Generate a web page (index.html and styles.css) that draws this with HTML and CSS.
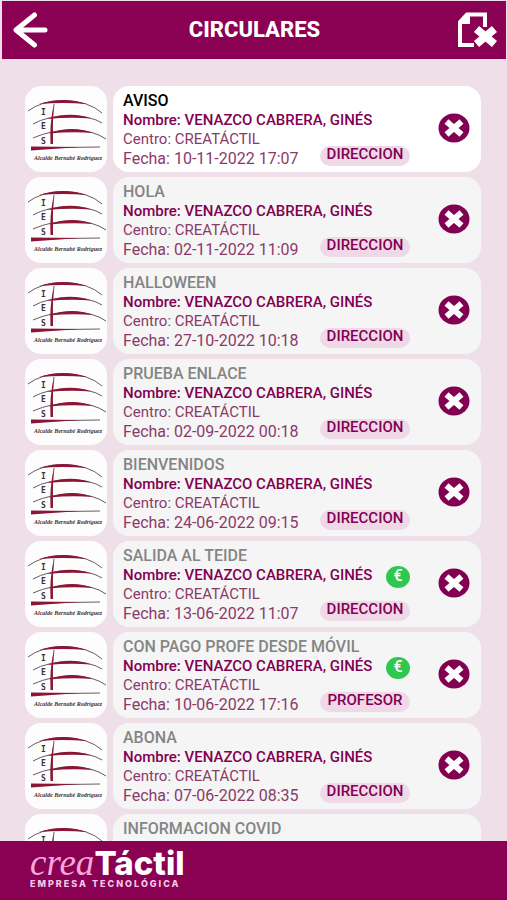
FILE: index.html
```html
<!DOCTYPE html>
<html lang="es">

<head>
    <meta charset="UTF-8">
    <meta name="viewport" content="width=device-width, initial-scale=1.0">
    <title>Circulares</title>
    <link rel="stylesheet" href="styles.css">
</head>

<body>
    <!-- Shared drawings -->
    <svg class="sprites" aria-hidden="true">
        <symbol id="school" viewBox="0 0 82 86">
            <g fill="none" stroke="#6b5a61" stroke-width="1">
                <path d="M3 25 Q16 15 38 14.500 Q64 15 77 27" />
                <path d="M8 38 Q22 30 45 29.500 Q66 30 77 37" />
                <path d="M8 52 Q26 44 47 44 Q68 44 81 53" />
                <path d="M29 18 Q26 36 27 58" />
                <path d="M7 62 L75 61" />
            </g>
            <g fill="#8a1535">
                <path d="M14 18 Q38 10 62 18 Q38 16 14 18z" />
                <path d="M22 33 Q45 25 66 32.500 Q45 31 22 33z" />
                <path d="M24 47.500 Q47 39 68 47 Q47 45.500 24 47.500z" />
                <path d="M28.500 20 Q24.500 38 25.500 58 L28 58 Q27.500 38 28.500 20z" />
                <path d="M6 60.500 L55 61 L6 64.500z" />
            </g>
            <g class="school-letters">
                <text x="16" y="29">I</text>
                <text x="16" y="43">E</text>
                <text x="16" y="58">S</text>
            </g>
            <text class="school-name" x="9" y="74">Alcalde Bernabé Rodríguez</text>
        </symbol>
        <symbol id="remove" viewBox="0 0 32 30">
            <ellipse cx="16" cy="15" rx="15.500" ry="14.500" fill="#820052" />
            <path d="M8.500 8.500 L23.500 21.500 M23.500 8.500 L8.500 21.500" stroke="#fff" stroke-width="6" />
        </symbol>
    </svg>

    <header class="header">
        <button class="header-btn" type="button" aria-label="Volver">
            <svg width="40" height="36" viewBox="0 0 40 36" fill="none" stroke="#fff" stroke-width="5" stroke-linecap="round" stroke-linejoin="round">
                <path d="M22.500 3 L4 18 L22.500 33 M5 18 H33" />
            </svg>
        </button>
        <h1>CIRCULARES</h1>
        <button class="header-btn" type="button" aria-label="Borrar circulares">
            <svg width="40" height="36" viewBox="0 0 40 36" fill="none" stroke="#fff">
                <path d="M17 33 H3 V10 L10 2.500 H28 V15" stroke-width="4" />
                <path d="M2 12 V9 L10 1 H13 V12z" fill="#fff" stroke="none" />
                <path d="M19.500 17 L37.500 32 M37.500 17 L19.500 32" stroke-width="8" />
            </svg>
        </button>
    </header>

    <main class="list">
        <article class="row">
            <svg class="thumb" role="img" aria-label="IES"><use href="#school" /></svg>
            <div class="card unread">
                <div class="info">
                    <h2>AVISO</h2>
                    <div class="line name"><span>Nombre: VENAZCO CABRERA, GINÉS</span></div>
                    <div class="line">Centro: CREATÁCTIL</div>
                    <div class="line date"><span>Fecha: 10-11-2022 17:07</span><span class="badge">DIRECCION</span></div>
                </div>
                <button class="remove" type="button" aria-label="Borrar"><svg width="32" height="30"><use href="#remove" /></svg></button>
            </div>
        </article>
        <article class="row">
            <svg class="thumb" role="img" aria-label="IES"><use href="#school" /></svg>
            <div class="card">
                <div class="info">
                    <h2>HOLA</h2>
                    <div class="line name"><span>Nombre: VENAZCO CABRERA, GINÉS</span></div>
                    <div class="line">Centro: CREATÁCTIL</div>
                    <div class="line date"><span>Fecha: 02-11-2022 11:09</span><span class="badge">DIRECCION</span></div>
                </div>
                <button class="remove" type="button" aria-label="Borrar"><svg width="32" height="30"><use href="#remove" /></svg></button>
            </div>
        </article>
        <article class="row">
            <svg class="thumb" role="img" aria-label="IES"><use href="#school" /></svg>
            <div class="card">
                <div class="info">
                    <h2>HALLOWEEN</h2>
                    <div class="line name"><span>Nombre: VENAZCO CABRERA, GINÉS</span></div>
                    <div class="line">Centro: CREATÁCTIL</div>
                    <div class="line date"><span>Fecha: 27-10-2022 10:18</span><span class="badge">DIRECCION</span></div>
                </div>
                <button class="remove" type="button" aria-label="Borrar"><svg width="32" height="30"><use href="#remove" /></svg></button>
            </div>
        </article>
        <article class="row">
            <svg class="thumb" role="img" aria-label="IES"><use href="#school" /></svg>
            <div class="card">
                <div class="info">
                    <h2>PRUEBA ENLACE</h2>
                    <div class="line name"><span>Nombre: VENAZCO CABRERA, GINÉS</span></div>
                    <div class="line">Centro: CREATÁCTIL</div>
                    <div class="line date"><span>Fecha: 02-09-2022 00:18</span><span class="badge">DIRECCION</span></div>
                </div>
                <button class="remove" type="button" aria-label="Borrar"><svg width="32" height="30"><use href="#remove" /></svg></button>
            </div>
        </article>
        <article class="row">
            <svg class="thumb" role="img" aria-label="IES"><use href="#school" /></svg>
            <div class="card">
                <div class="info">
                    <h2>BIENVENIDOS</h2>
                    <div class="line name"><span>Nombre: VENAZCO CABRERA, GINÉS</span></div>
                    <div class="line">Centro: CREATÁCTIL</div>
                    <div class="line date"><span>Fecha: 24-06-2022 09:15</span><span class="badge">DIRECCION</span></div>
                </div>
                <button class="remove" type="button" aria-label="Borrar"><svg width="32" height="30"><use href="#remove" /></svg></button>
            </div>
        </article>
        <article class="row">
            <svg class="thumb" role="img" aria-label="IES"><use href="#school" /></svg>
            <div class="card">
                <div class="info">
                    <h2>SALIDA AL TEIDE</h2>
                    <div class="line name"><span>Nombre: VENAZCO CABRERA, GINÉS</span><span class="euro">€</span></div>
                    <div class="line">Centro: CREATÁCTIL</div>
                    <div class="line date"><span>Fecha: 13-06-2022 11:07</span><span class="badge">DIRECCION</span></div>
                </div>
                <button class="remove" type="button" aria-label="Borrar"><svg width="32" height="30"><use href="#remove" /></svg></button>
            </div>
        </article>
        <article class="row">
            <svg class="thumb" role="img" aria-label="IES"><use href="#school" /></svg>
            <div class="card">
                <div class="info">
                    <h2>CON PAGO PROFE DESDE MÓVIL</h2>
                    <div class="line name"><span>Nombre: VENAZCO CABRERA, GINÉS</span><span class="euro">€</span></div>
                    <div class="line">Centro: CREATÁCTIL</div>
                    <div class="line date"><span>Fecha: 10-06-2022 17:16</span><span class="badge">PROFESOR</span></div>
                </div>
                <button class="remove" type="button" aria-label="Borrar"><svg width="32" height="30"><use href="#remove" /></svg></button>
            </div>
        </article>
        <article class="row">
            <svg class="thumb" role="img" aria-label="IES"><use href="#school" /></svg>
            <div class="card">
                <div class="info">
                    <h2>ABONA</h2>
                    <div class="line name"><span>Nombre: VENAZCO CABRERA, GINÉS</span></div>
                    <div class="line">Centro: CREATÁCTIL</div>
                    <div class="line date"><span>Fecha: 07-06-2022 08:35</span><span class="badge">DIRECCION</span></div>
                </div>
                <button class="remove" type="button" aria-label="Borrar"><svg width="32" height="30"><use href="#remove" /></svg></button>
            </div>
        </article>
        <article class="row">
            <svg class="thumb" role="img" aria-label="IES"><use href="#school" /></svg>
            <div class="card">
                <div class="info">
                    <h2>INFORMACION COVID</h2>
                </div>
            </div>
        </article>
    </main>

    <footer class="footer">
        <div class="brand"><em>crea</em><strong>Táctil</strong></div>
        <div class="tagline">EMPRESA TECNOLÓGICA</div>
    </footer>
</body>

</html>
```

FILE: styles.css
```css
* {
    box-sizing: border-box;
}

body {
    font-family: Roboto, "Liberation Sans", sans-serif;
    font-size: 15px;
    display: flex;
    flex-direction: column;
    height: 100vh;
    margin: 0;
    background-color: #efdfe8;
    color: #820052;
}

h1,
h2 {
    margin: 0;
}

button {
    padding: 0;
    border: none;
    background: none;
    cursor: pointer;
}

svg {
    display: block;
}

.sprites {
    display: none;
}

.header {
    flex: none;
    display: flex;
    align-items: center;
    justify-content: space-between;
    height: 58px;
    margin: 1px 1px 0 2px;
    padding: 0 9px 0 10px;
    background-color: #8a0052;
}

.header h1 {
    font-size: 22px;
    font-weight: 800;
    line-height: 28px;
    color: #fff;
}

/* Scrolling list of circulars */
.list {
    flex: 1;
    min-height: 0;
    display: flex;
    flex-direction: column;
    gap: 5px;
    padding: 27px 26px 0 25px;
    overflow: hidden;
}

.row {
    flex: none;
    display: flex;
    gap: 6px;
    height: 86px;
}

.thumb {
    flex: none;
    width: 82px;
    height: 86px;
    border-radius: 16px;
    background-color: #fdfdfd;
}

.school-letters {
    font: bold 8px "DejaVu Sans Mono", monospace;
    fill: #3d3338;
}

.school-name {
    font: italic bold 6px "Liberation Serif", serif;
    fill: #3d3338;
}

.card {
    flex: 1;
    display: flex;
    padding: 5px 11px 0 10px;
    border-radius: 16px;
    background-color: #f5f5f5;
}

.card.unread {
    background-color: #fff;
}

.info {
    flex: 1;
}

.info h2 {
    font-size: 16px;
    font-weight: 500;
    line-height: 20px;
    color: #858585;
}

.unread h2 {
    color: #000;
}

.line {
    display: flex;
    align-items: flex-end;
    justify-content: space-between;
    height: 19px;
    line-height: 19px;
    white-space: nowrap;
    color: #8b3a68;
}

.date {
    font-size: 16px;
}

.name {
    align-items: flex-start;
    font-weight: 500;
    color: #820052;
}

.badge {
    width: 90px;
    height: 20px;
    margin-bottom: 2px;
    border-radius: 10px;
    background-color: #f0d9e7;
    font-size: 15px;
    font-weight: 500;
    line-height: 17px;
    text-align: center;
    color: #820052;
}

.euro {
    width: 24px;
    height: 22px;
    border-radius: 50%;
    background-color: #2fc84f;
    font-size: 16px;
    line-height: 20px;
    text-align: center;
    color: #fff;
}

.remove {
    align-self: center;
    margin: 0 0 8px 28px;
}

.footer {
    flex: none;
    display: flex;
    flex-direction: column;
    height: 59px;
    padding: 6px 30px;
    background-color: #8a0052;
    color: #fff;
}

.brand {
    display: flex;
    align-items: baseline;
    font-family: Inter, sans-serif;
    font-size: 33px;
    line-height: 32px;
}

.brand strong {
    font-weight: 800;
}

.brand em {
    font-family: "Liberation Serif", serif;
    font-size: 37px;
    line-height: 32px;
    color: #f5a8dc;
}

.tagline {
    font-family: Inter, sans-serif;
    font-size: 9px;
    font-weight: 800;
    line-height: 10px;
    letter-spacing: 2px;
    color: #f5c8e8;
}
```
